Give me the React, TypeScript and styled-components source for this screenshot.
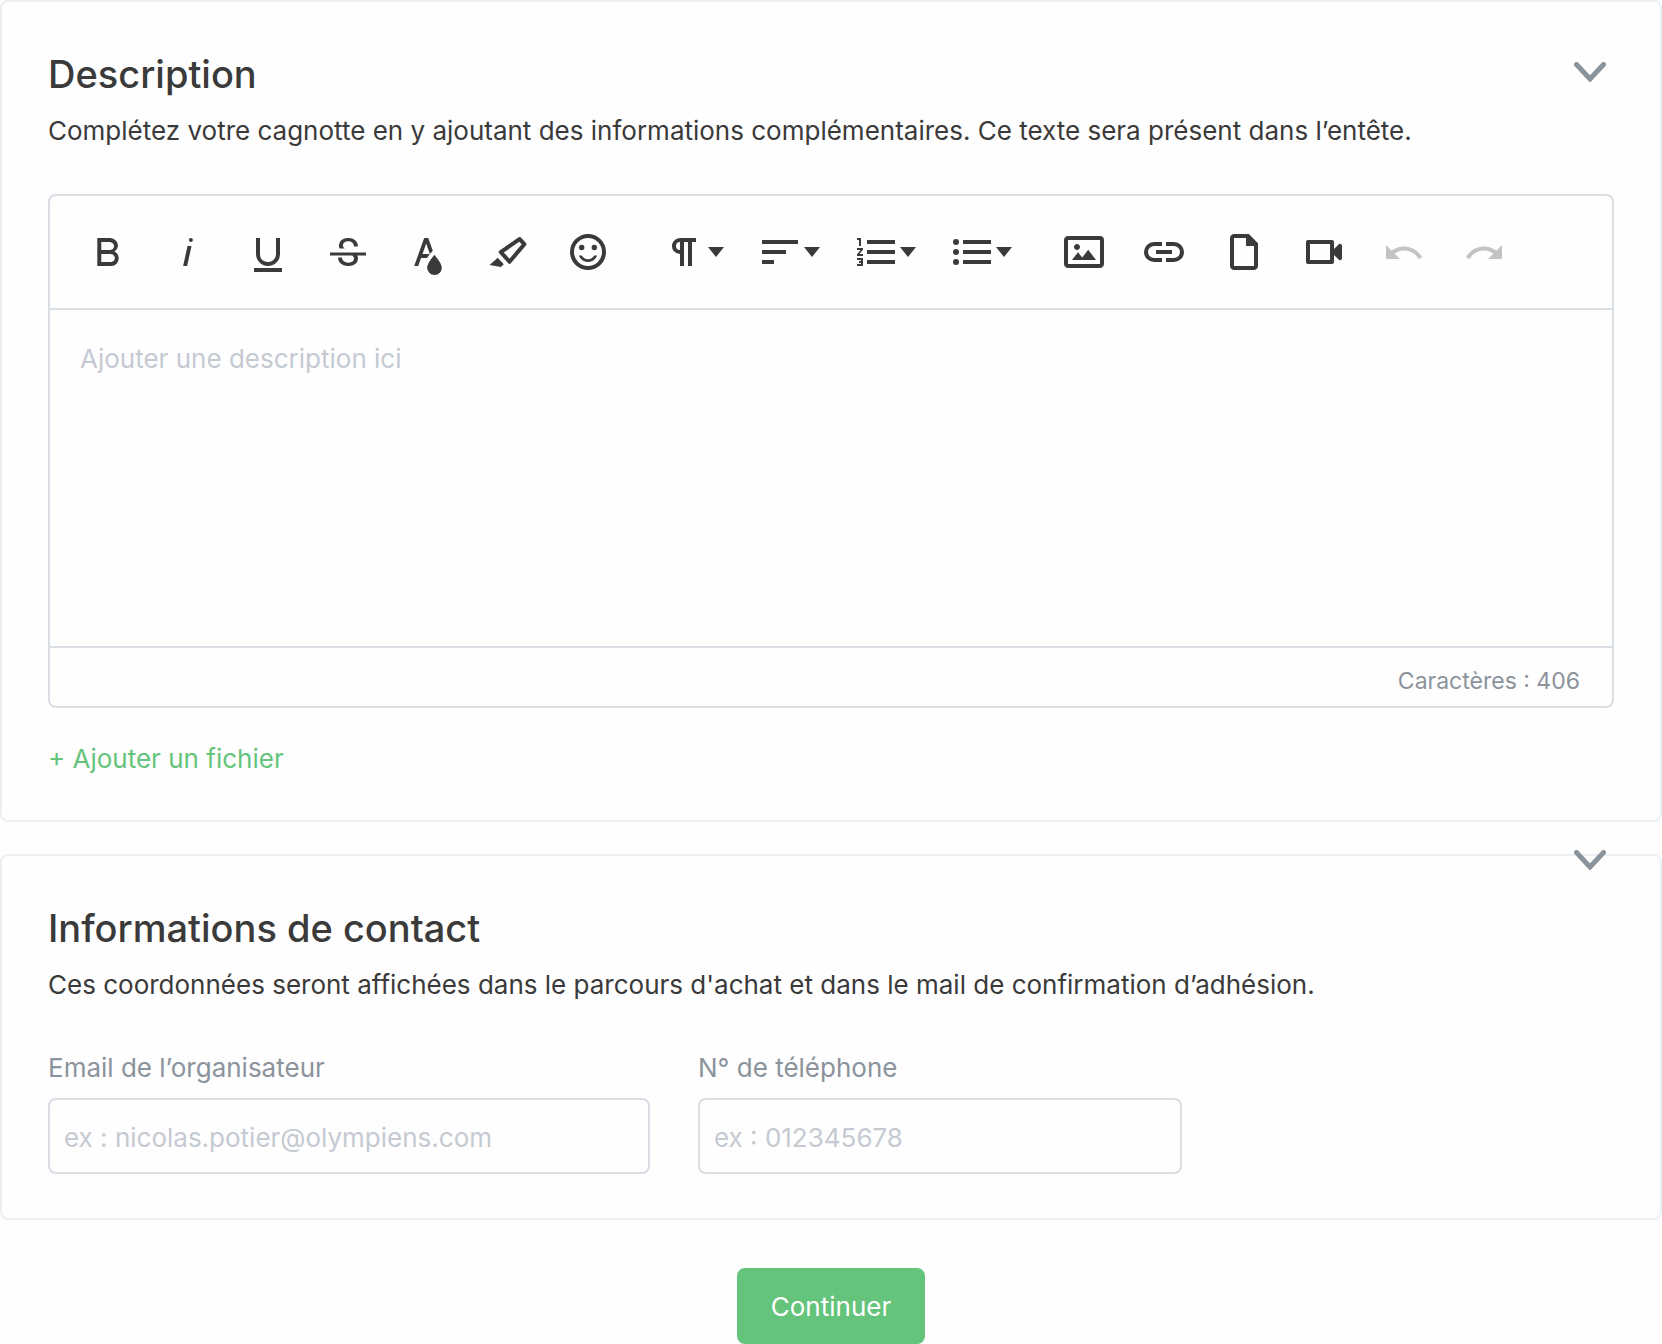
import React, { useId, useState } from "react";
import styled, { createGlobalStyle } from "styled-components";

const color = {
  text: "#3a3a3a",
  muted: "#8b939c",
  placeholder: "#c5cad2",
  cardBorder: "#ecf0f4",
  fieldBorder: "#d9dee5",
  green: "#65c47c",
};

const GlobalStyle = createGlobalStyle`
  *, *::before, *::after { box-sizing: border-box; }
  body {
    margin: 0;
    background: #fefefe;
    color: ${color.text};
    font-family: Inter, "Liberation Sans", sans-serif;
    font-size: 26px;
  }
  button, input, textarea { font: inherit; color: inherit; }
`;

const Form = styled.form`
  display: flex;
  flex-direction: column;
  gap: 32px;
`;

const Card = styled.section`
  position: relative;
  padding: 48px 46px 44px;
  border: 2px solid ${color.cardBorder};
  border-radius: 8px;
`;

const Title = styled.h2`
  margin: 0 0 12px;
  font-size: 38px;
  line-height: 48px;
  font-weight: 500;
`;

const Intro = styled.p`
  margin: 0;
  line-height: 42px;
`;

const Toggle = styled.button<{ $top: number }>`
  position: absolute;
  top: ${(p) => p.$top}px;
  right: 46px;
  display: grid;
  place-items: center;
  width: 48px;
  height: 48px;
  padding: 0;
  border: 0;
  background: none;
  color: ${color.muted};
  cursor: pointer;
`;

const Editor = styled.div`
  margin-top: 42px;
  border: 2px solid ${color.fieldBorder};
  border-radius: 8px;
`;

const Toolbar = styled.div`
  display: flex;
  flex-wrap: wrap;
  gap: 20px;
  padding: 18px 20px;
  border-bottom: 2px solid ${color.fieldBorder};
`;

const ToolGroup = styled.div`
  display: flex;
  gap: 4px;
`;

const ToolButton = styled.button<{ $menu?: boolean }>`
  display: flex;
  align-items: center;
  width: ${(p) => (p.$menu ? 92 : 76)}px;
  height: 76px;
  padding: 0 0 0 14px;
  border: 0;
  border-radius: 8px;
  background: none;
  cursor: pointer;

  &:disabled {
    color: #c4c4c4;
    cursor: default;
  }
`;

const Icon = styled.svg`
  flex: none;
  width: 48px;
  height: 48px;
  fill: currentColor;
`;

const Caret = styled.svg`
  flex: none;
  width: 16px;
  height: 10px;
  fill: currentColor;
`;

const EditorText = styled.textarea`
  display: block;
  width: 100%;
  height: 336px;
  padding: 28px 30px;
  border: 0;
  outline: 0;
  resize: none;
  background: none;
  line-height: 42px;

  &::placeholder { color: ${color.placeholder}; opacity: 1; }
`;

const EditorFooter = styled.div`
  padding: 16px 32px 8px;
  border-top: 2px solid ${color.fieldBorder};
  color: ${color.muted};
  font-size: 23px;
  line-height: 34px;
  text-align: right;
`;

const AddFile = styled.button`
  display: block;
  margin-top: 34px;
  padding: 0;
  border: 0;
  background: none;
  color: ${color.green};
  line-height: 34px;
  cursor: pointer;
`;

const Fields = styled.div`
  display: flex;
  gap: 48px;
  margin-top: 46px;
`;

const FieldBox = styled.div<{ $width: number }>`
  flex: 0 1 ${(p) => p.$width}px;
  min-width: 0;
`;

const Label = styled.label`
  display: block;
  margin-bottom: 14px;
  color: ${color.muted};
  line-height: 32px;
`;

const Input = styled.input`
  display: block;
  width: 100%;
  height: 76px;
  padding: 2px 14px 0;
  border: 2px solid ${color.fieldBorder};
  border-radius: 8px;
  background: none;

  &::placeholder { color: ${color.placeholder}; opacity: 1; }
`;

const Submit = styled.button`
  align-self: center;
  height: 76px;
  margin-top: 16px;
  padding: 0 34px;
  border: 0;
  border-radius: 8px;
  background: ${color.green};
  color: #fff;
  cursor: pointer;
`;

type Tool = { name: string; d: string; menu?: boolean; disabled?: boolean };

const toolGroups: Tool[][] = [
  [
    { name: "Gras", d: "M15.25,11.8h0A3.68,3.68,0,0,0,17,9a3.93,3.93,0,0,0-3.86-4H6.65V19h7a3.74,3.74,0,0,0,3.7-3.78V15.1A3.64,3.64,0,0,0,15.25,11.8ZM8.65,7h4.2a2.09,2.09,0,0,1,2,1.3,2.09,2.09,0,0,1-1.37,2.61,2.23,2.23,0,0,1-.63.09H8.65Zm4.6,10H8.65V13h4.6a2.09,2.09,0,0,1,2,1.3,2.09,2.09,0,0,1-1.37,2.61A2.23,2.23,0,0,1,13.25,17Z" },
    { name: "Italique", d: "M11.76,9h2l-2.2,10h-2Zm1.68-4a1,1,0,1,0,1,1,1,1,0,0,0-1-1Z" },
    { name: "Souligné", d: "M19,20v2H5V20Zm-3-6.785a4,4,0,0,1-5.74,3.4A3.75,3.75,0,0,1,8,13.085V5.005H6v8.21a6,6,0,0,0,8,5.44,5.851,5.851,0,0,0,4-5.65v-8H16ZM16,5v0h2V5ZM8,5H6v0H8Z" },
    { name: "Barré", d: "M3,12.20294H21v1.5H16.63422a3.59782,3.59782,0,0,1,.34942,1.5929,3.252,3.252,0,0,1-1.31427,2.6997A5.55082,5.55082,0,0,1,12.20251,19a6.4421,6.4421,0,0,1-2.62335-.539,4.46335,4.46335,0,0,1-1.89264-1.48816,3.668,3.668,0,0,1-.67016-2.15546V14.704h.28723v-.0011h.34149v.0011H9.02v.11334a2.18275,2.18275,0,0,0,.85413,1.83069,3.69,3.69,0,0,0,2.32836.67926,3.38778,3.38778,0,0,0,2.07666-.5462,1.73346,1.73346,0,0,0,.7013-1.46655,1.69749,1.69749,0,0,0-.647-1.43439,3.00525,3.00525,0,0,0-.27491-.17725H3ZM16.34473,7.05981A4.18163,4.18163,0,0,0,14.6236,5.5462,5.627,5.627,0,0,0,12.11072,5,5.16083,5.16083,0,0,0,8.74719,6.06213,3.36315,3.36315,0,0,0,7.44006,8.76855a3.22923,3.22923,0,0,0,.3216,1.42786h2.59668c-.08338-.05365-.18537-.10577-.25269-.16064a1.60652,1.60652,0,0,1-.65283-1.30036,1.79843,1.79843,0,0,1,.68842-1.5108,3.12971,3.12971,0,0,1,1.96948-.55243,3.04779,3.04779,0,0,1,2.106.6687,2.35066,2.35066,0,0,1,.736,1.83258v.11341h2.00317V9.17346A3.90013,3.90013,0,0,0,16.34473,7.05981Z" },
    { name: "Couleur du texte", d: "M15.2,13.494s-3.6,3.9-3.6,6.3a3.65,3.65,0,0,0,7.3.1v-.1C18.9,17.394,15.2,13.494,15.2,13.494Zm-1.47-1.357.669-.724L12.1,5h-2l-5,14h2l1.43-4h2.943A24.426,24.426,0,0,1,13.726,12.137ZM11.1,7.8l1.86,5.2H9.244Z" },
    { name: "Surlignage", d: "M9.91752,12.24082l7.74791-5.39017,1.17942,1.29591-6.094,7.20747L9.91752,12.24082M7.58741,12.652l4.53533,4.98327a.93412.93412,0,0,0,1.39531-.0909L20.96943,8.7314A.90827.90827,0,0,0,20.99075,7.533l-2.513-2.76116a.90827.90827,0,0,0-1.19509-.09132L7.809,11.27135A.93412.93412,0,0,0,7.58741,12.652ZM2.7939,18.52772,8.41126,19.5l1.47913-1.34617-3.02889-3.328Z" },
    { name: "Émoticônes", d: "M11.991,3A9,9,0,1,0,21,12,8.99557,8.99557,0,0,0,11.991,3ZM12,19a7,7,0,1,1,7-7A6.99808,6.99808,0,0,1,12,19Zm3.105-5.2h1.503a4.94542,4.94542,0,0,1-9.216,0H8.895a3.57808,3.57808,0,0,0,6.21,0ZM7.5,9.75A1.35,1.35,0,1,1,8.85,11.1,1.35,1.35,0,0,1,7.5,9.75Zm6.3,0a1.35,1.35,0,1,1,1.35,1.35A1.35,1.35,0,0,1,13.8,9.75Z" },
  ],
  [
    { name: "Format de paragraphe", menu: true, d: "M10.15,5A4.11,4.11,0,0,0,6.08,8.18,4,4,0,0,0,10,13v6h2V7h2V19h2V7h2V5ZM8,9a2,2,0,0,1,2-2v4A2,2,0,0,1,8,9Z" },
    { name: "Alignement", menu: true, d: "M3,6H21V8H3ZM3,11H15v2H3ZM3,16H9v2H3Z" },
    { name: "Liste numérotée", menu: true, d: "M2.5,16h2v.5h-1v1h1V18h-2v1h3V15h-3Zm1-7h1V5h-2V6h1Zm-1,2H4.3L2.5,13.1V14h3V13H3.7l1.8-2.1V10h-3Zm5-5V8h14V6Zm0,12h14V16H7.5Zm0-5h14V11H7.5Z" },
    { name: "Liste à puces", menu: true, d: "M4,10.5A1.5,1.5,0,1,0,5.5,12,1.5,1.5,0,0,0,4,10.5Zm0-5A1.5,1.5,0,1,0,5.5,7,1.5,1.5,0,0,0,4,5.5Zm0,10A1.5,1.5,0,1,0,5.5,17,1.5,1.5,0,0,0,4,15.5ZM7.5,6V8h14V6Zm0,12h14V16H7.5Zm0-5h14V11H7.5Z" },
  ],
  [
    { name: "Insérer une image", d: "M14.2,11l3.8,5H6l3-3.9l2.1,2.7L14,11H14.2z M8.5,11c0.8,0,1.5-0.7,1.5-1.5S9.3,8,8.5,8S7,8.7,7,9.5C7,10.3,7.7,11,8.5,11z M22,6v12c0,1.1-0.9,2-2,2H4c-1.1,0-2-0.9-2-2V6c0-1.1,0.9-2,2-2h16C21.1,4,22,4.8,22,6z M20,8.8V6H4v12h16V8.8z" },
    { name: "Insérer un lien", d: "M11,17H7A5,5,0,0,1,7,7h4V9H7a3,3,0,0,0,0,6h4ZM17,7H13V9h4a3,3,0,0,1,0,6H13v2h4A5,5,0,0,0,17,7Zm-1,4H8v2h8Z" },
    { name: "Insérer un fichier", d: "M7,3C5.9,3,5,3.9,5,5v14c0,1.1,0.9,2,2,2h10c1.1,0,2-0.9,2-2V7.6L14.4,3H7z M17,19H7V5h6v4h4V19z" },
    { name: "Insérer une vidéo", d: "M15,8v8H5V8H15m2,2.5V7a1,1,0,0,0-1-1H4A1,1,0,0,0,3,7V17a1,1,0,0,0,1,1H16a1,1,0,0,0,1-1V13.5l2.29,2.29A1,1,0,0,0,21,15.08V8.91a1,1,0,0,0-1.71-.71Z" },
    { name: "Annuler", disabled: true, d: "M10.4,9.4c-1.7,0.3-3.2,0.9-4.6,2L3,8.5v7h7l-2.7-2.7c3.7-2.6,8.8-1.8,11.5,1.9c0.2,0.3,0.4,0.5,0.5,0.8l1.8-0.9C18.9,10.8,14.7,8.7,10.4,9.4z" },
    { name: "Rétablir", disabled: true, d: "M13.6,9.4c1.7,0.3,3.2,0.9,4.6,2L21,8.5v7h-7l2.7-2.7C13,10.1,7.9,11,5.3,14.7c-0.2,0.3-0.4,0.5-0.5,0.8L3,14.6C5.1,10.8,9.3,8.7,13.6,9.4z" },
  ],
];

function CollapseToggle({ top }: { top: number }) {
  return (
    <Toggle type="button" $top={top} aria-label="Replier la section">
      <svg width="32" height="20" viewBox="0 0 32 20" fill="none" stroke="currentColor" strokeWidth="5" strokeLinecap="round">
        <path d="M2.5 2.5 L16 17 L29.5 2.5" />
      </svg>
    </Toggle>
  );
}

function Field(props: { label: string; type: string; placeholder: string; width: number }) {
  const id = useId();
  return (
    <FieldBox $width={props.width}>
      <Label htmlFor={id}>{props.label}</Label>
      <Input id={id} type={props.type} placeholder={props.placeholder} />
    </FieldBox>
  );
}

export default function App() {
  const [description, setDescription] = useState("");

  return (
    <>
      <GlobalStyle />
      <Form onSubmit={(e) => e.preventDefault()}>
        <Card>
          <Title>Description</Title>
          <Intro>
            Complétez votre cagnotte en y ajoutant des informations complémentaires. Ce texte sera présent dans l’entête.
          </Intro>
          <CollapseToggle top={46} />
          <Editor>
            <Toolbar role="toolbar" aria-label="Mise en forme">
              {toolGroups.map((tools, i) => (
                <ToolGroup key={i}>
                  {tools.map((tool) => (
                    <ToolButton key={tool.name} type="button" aria-label={tool.name} disabled={tool.disabled} $menu={tool.menu}>
                      <Icon viewBox="0 0 24 24"><path d={tool.d} /></Icon>
                      {tool.menu && <Caret viewBox="0 0 16 10"><path d="M0 0H16L8 10Z" /></Caret>}
                    </ToolButton>
                  ))}
                </ToolGroup>
              ))}
            </Toolbar>
            <EditorText
              aria-label="Description"
              placeholder="Ajouter une description ici"
              value={description}
              onChange={(e) => setDescription(e.target.value)}
            />
            <EditorFooter>Caractères : {406 - description.length}</EditorFooter>
          </Editor>
          <AddFile type="button">+ Ajouter un fichier</AddFile>
        </Card>

        <Card>
          <Title>Informations de contact</Title>
          <Intro>
            Ces coordonnées seront affichées dans le parcours d'achat et dans le mail de confirmation d’adhésion.
          </Intro>
          <CollapseToggle top={-20} />
          <Fields>
            <Field label="Email de l’organisateur" type="email" placeholder="ex : nicolas.potier@olympiens.com" width={602} />
            <Field label="N° de téléphone" type="tel" placeholder="ex : 012345678" width={484} />
          </Fields>
        </Card>

        <Submit type="submit">Continuer</Submit>
      </Form>
    </>
  );
}
